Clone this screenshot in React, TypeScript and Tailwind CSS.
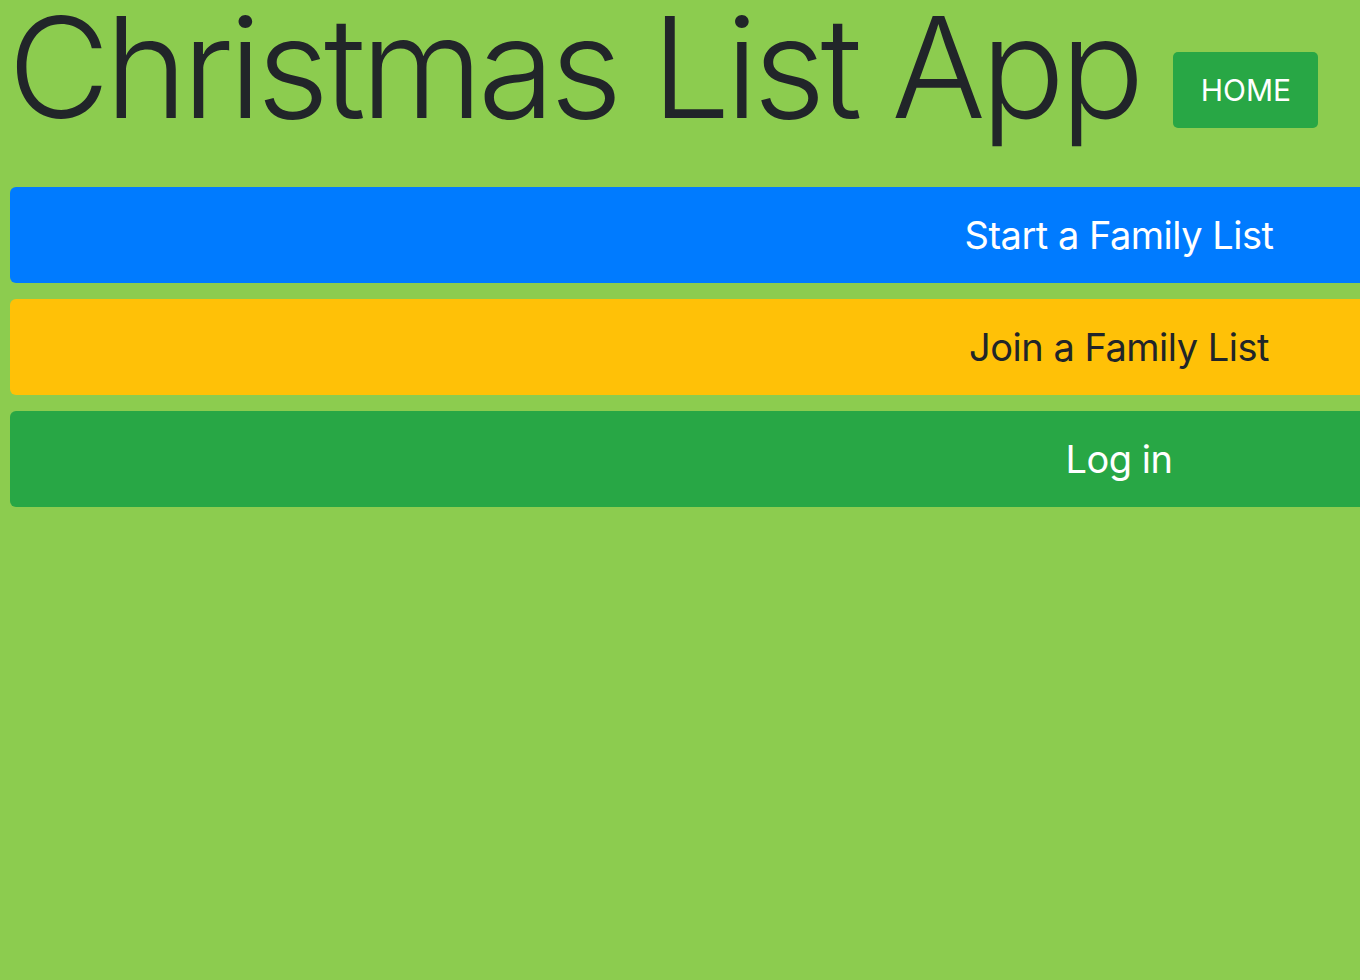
import React from "react";

const font = { fontFamily: "Inter, 'Noto Sans', sans-serif" };

function BigButton({ label, tone }: { label: string; tone: "blue" | "yellow" | "green" }) {
  const colors =
    tone === "blue"
      ? "bg-[#007bff] text-white"
      : tone === "yellow"
        ? "bg-[#ffc107] text-[#212529]"
        : "bg-[#28a745] text-white";
  return (
    <button
      className={`flex h-[96px] w-[2218px] shrink-0 items-center justify-center rounded-[6px] text-[38px] leading-none tracking-[-0.5px] ${colors}`}
    >
      {label}
    </button>
  );
}

export default function App() {
  return (
    <div className="h-[980px] w-[1360px] overflow-hidden bg-[#8ccc4f]" style={font}>
      <header className="flex h-[180px] items-center gap-[34px] pl-[8px]">
        <h1 className="whitespace-nowrap pb-[46px] text-[140px] font-light leading-[1] tracking-[-5px] text-[#212529]">
          Christmas List App
        </h1>
        <button className="flex h-[76px] w-[145px] shrink-0 items-center justify-center rounded-[5px] bg-[#28a745] text-[30px] text-white">
          HOME
        </button>
      </header>
      <div className="mt-[7px] flex flex-col gap-[16px] pl-[10px]">
        <BigButton label="Start a Family List" tone="blue" />
        <BigButton label="Join a Family List" tone="yellow" />
        <BigButton label="Log in" tone="green" />
      </div>
    </div>
  );
}
